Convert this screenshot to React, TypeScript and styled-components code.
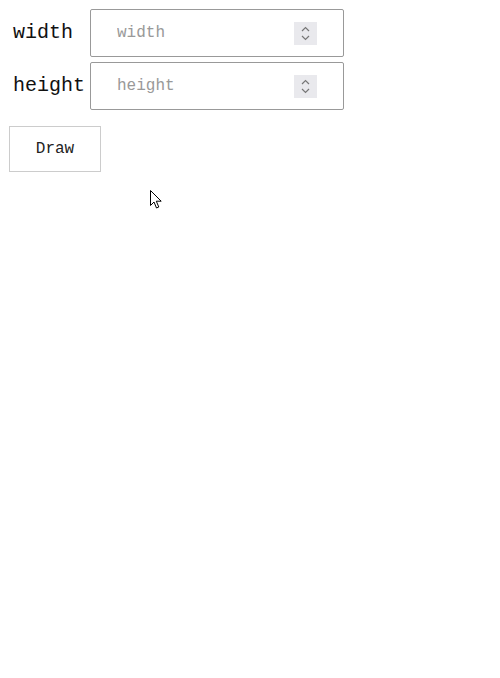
import styled, { createGlobalStyle } from "styled-components";

const GlobalStyle = createGlobalStyle`
	html, body {
		margin: 0;
		padding: 0;
		background: #ffffff;
	}
	body {
		font-family: "Courier New", "Liberation Mono", monospace;
		color: #000000;
	}
`;

const Page = styled.div`
	position: relative;
	width: 500px;
	height: 678px;
	padding: 9px 0 0 9px;
	box-sizing: border-box;
`;

const Form = styled.div`
	display: grid;
	grid-template-columns: 81px 254px;
	row-gap: 5px;
	align-items: center;
`;

const Label = styled.label`
	font-size: 20px;
	padding-left: 4px;
	line-height: 1;
	color: #111111;
`;

const Field = styled.div`
	display: flex;
	align-items: center;
	height: 48px;
	box-sizing: border-box;
	border: 1px solid #999999;
	border-radius: 2px;
	padding: 0 26px 0 26px;
	background: #ffffff;
`;

const Input = styled.input`
	flex: 1 1 auto;
	min-width: 0;
	border: none;
	outline: none;
	padding: 0;
	font-family: "Courier New", "Liberation Mono", monospace;
	font-size: 16px;
	color: #000000;
	background: transparent;

	&::placeholder {
		color: #999999;
	}
`;

const Spinner = styled.div`
	flex: 0 0 auto;
	width: 23px;
	height: 23px;
	background: #e9e9ed;
	display: flex;
	align-items: center;
	justify-content: center;
`;

const Button = styled.button`
	margin-top: 16px;
	width: 92px;
	height: 46px;
	box-sizing: border-box;
	border: 1px solid #cccccc;
	background: #ffffff;
	font-family: "Courier New", "Liberation Mono", monospace;
	font-size: 16px;
	color: #222222;
	padding: 0;
`;

const Cursor = styled.svg`
	position: absolute;
	left: 150px;
	top: 190px;
`;

function SpinIcon() {
	return (
		<Spinner>
			<svg width="11" height="17" viewBox="0 0 11 17" fill="none" stroke="#777777" strokeWidth="1.2">
				<path d="M2 6 L5.5 2.5 L9 6" />
				<path d="M2 11 L5.5 14.5 L9 11" />
			</svg>
		</Spinner>
	);
}

function NumberField({ name }: { name: string }) {
	return (
		<>
			<Label htmlFor={name}>{name}</Label>
			<Field>
				<Input id={name} type="text" placeholder={name} />
				<SpinIcon />
			</Field>
		</>
	);
}

export default function App() {
	return (
		<>
			<GlobalStyle />
			<Page>
				<Form>
					<NumberField name="width" />
					<NumberField name="height" />
				</Form>
				<Button>Draw</Button>
				<Cursor width="14" height="20" viewBox="0 0 14 20">
					<path d="M0.5 0.5 L0.5 15.5 L4 12 L6.5 18 L8.8 17 L6.3 11.2 L11.2 11.2 Z" fill="#ffffff" stroke="#000000" strokeWidth="1" strokeLinejoin="round" />
				</Cursor>
			</Page>
		</>
	);
}
